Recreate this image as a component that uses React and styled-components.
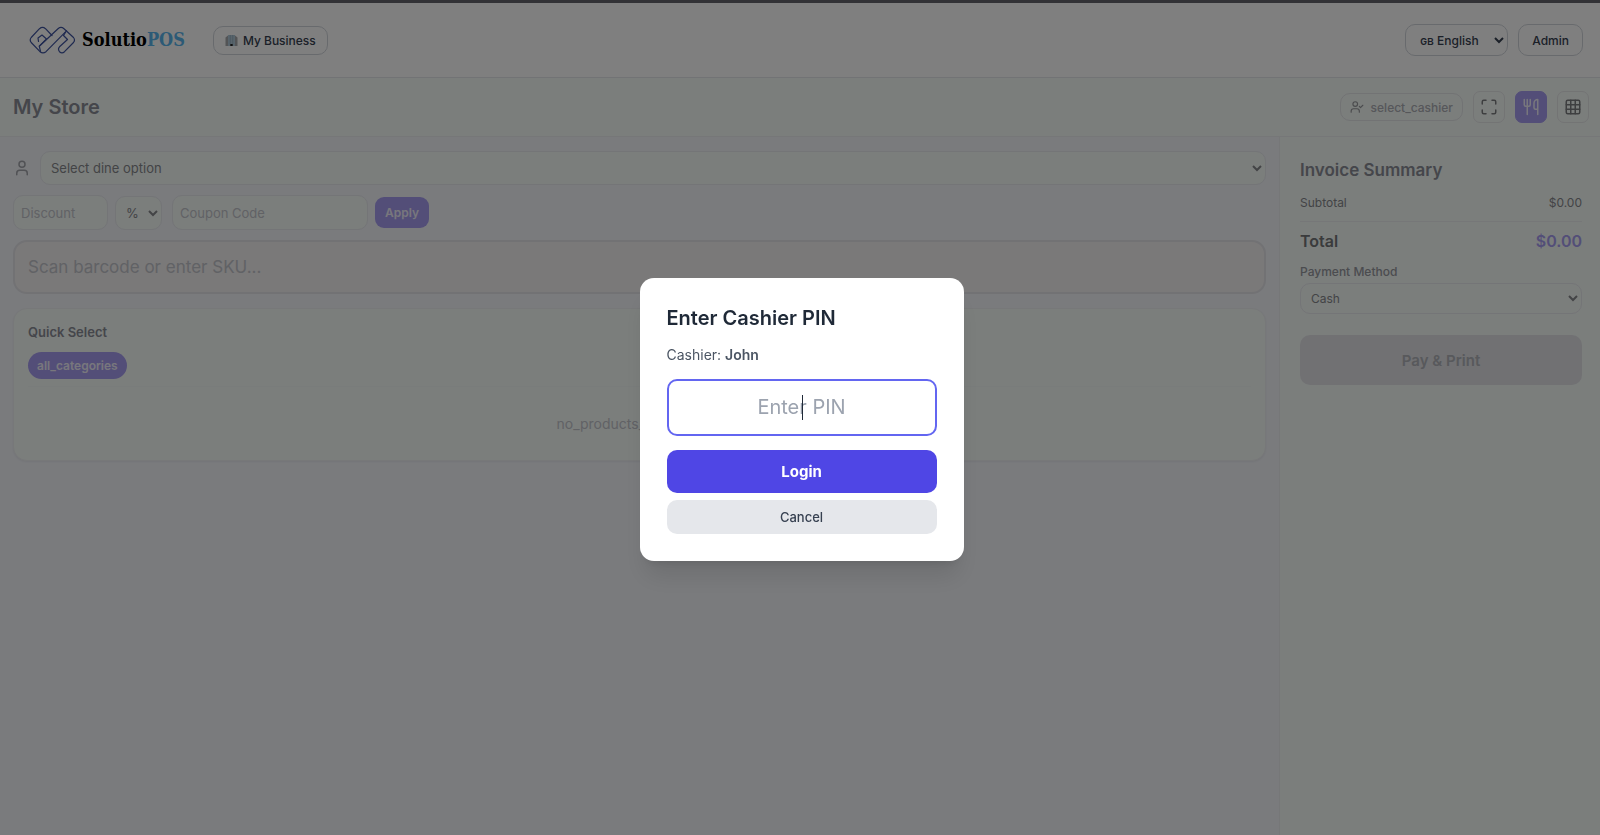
import React, { useState } from 'react';
import styled, { createGlobalStyle, css } from 'styled-components';
import { User, UserCheck, Maximize, Utensils, Grid3x3 } from 'lucide-react';

const GlobalStyle = createGlobalStyle`
  * {
    box-sizing: border-box;
  }

  body {
    margin: 0;
    font-family: Inter, sans-serif;
    font-size: 14px;
    color: #6a6b70;
    background: #f4f6fb;
  }

  button, input, select {
    font-family: inherit;
    margin: 0;
  }

  h1, h2, h3, p {
    margin: 0;
  }
`;

const Page = styled.div`
  min-height: 100vh;
  display: flex;
  flex-direction: column;
  border-top: 3px solid #64646c;
`;

const Header = styled.header`
  display: flex;
  align-items: center;
  justify-content: space-between;
  height: 75px;
  padding: 0 17px 0 29px;
  background: #ffffff;
  border-bottom: 1px solid #e5e7eb;
`;

const Group = styled.div`
  display: flex;
  align-items: center;
  gap: ${(p) => p.$gap || 10}px;
`;

const Brand = styled.a`
  display: flex;
  align-items: center;
  gap: 6px;
  font-family: "DejaVu Serif Condensed", "Liberation Serif", serif;
  font-size: 18px;
  line-height: 28px;
  font-weight: 700;
  color: #000000;
  text-decoration: none;

  span span {
    color: #59b4ec;
  }
`;

const pill = css`
  height: ${(p) => p.$height || 32}px;
  border: 1px solid #d1d5db;
  border-radius: 10px;
  background: #ffffff;
  color: #374151;
  font-size: 12px;
  font-weight: 500;
`;

const HeaderButton = styled.button`
  ${pill}
  display: flex;
  align-items: center;
  gap: 5px;
  padding: 0 ${(p) => p.$pad || 13}px;
`;

const LanguageSelect = styled.select`
  ${pill}
  width: 103px;
  padding: 0 0 0 10px;
`;

const Toolbar = styled.div`
  display: flex;
  align-items: center;
  justify-content: space-between;
  height: 59px;
  padding: 0 11px 0 13px;
  background: #f7fcf9;
  border-bottom: 1px solid #eceef0;
`;

const StoreName = styled.h1`
  font-size: 20px;
  line-height: 28px;
  font-weight: 600;
  color: #8a8d96;
`;

const CashierButton = styled.button`
  display: flex;
  align-items: center;
  gap: 7px;
  height: 28px;
  padding: 0 9px;
  border: 1px solid #e4e6e8;
  border-radius: 10px;
  background: transparent;
  color: #acaeb4;
  font-size: 12px;
  font-weight: 500;

  svg {
    color: #96989c;
  }
`;

const IconButton = styled.button`
  display: flex;
  align-items: center;
  justify-content: center;
  width: 32px;
  height: 32px;
  padding: 0;
  border: 1px solid ${(p) => (p.$active ? '#a69cf0' : '#e6e8e9')};
  border-radius: 7px;
  background: ${(p) => (p.$active ? '#a69cf0' : '#f7fcf9')};
  color: ${(p) => (p.$active ? '#f0eefa' : '#7c7e80')};
`;

const Body = styled.div`
  flex: 1;
  display: flex;
`;

const Main = styled.main`
  flex: 1;
  min-width: 0;
  display: flex;
  flex-direction: column;
  padding: 14px 13px;
`;

const DineRow = styled.label`
  display: flex;
  align-items: center;
  gap: 9px;
  color: #a2a4aa;
`;

const field = css`
  border: 1px solid #e8eaee;
  border-radius: 10px;
  background: #f7fcf9;
  color: #86888c;
  font-size: 13px;

  &::placeholder {
    color: #c2c4cb;
  }
`;

const DineSelect = styled.select`
  ${field}
  flex: 1;
  min-width: 0;
  height: 34px;
  padding: 0 0 0 6px;
`;

const DiscountRow = styled.div`
  display: flex;
  align-items: center;
  gap: 7px;
  margin-top: 10px;
`;

const TextField = styled.input`
  ${field}
  width: ${(p) => p.$width}px;
  height: 35px;
  padding: 0 7px;
`;

const UnitSelect = styled.select`
  ${field}
  width: 47px;
  height: 34px;
  margin-right: 3px;
  padding: 0 0 0 6px;
`;

const ApplyButton = styled.button`
  height: 31px;
  padding: 0 10px;
  border: 0;
  border-radius: 9px;
  background: #a69cf0;
  color: #f0eefa;
  font-size: 12px;
  font-weight: 600;
`;

const ScanInput = styled.input`
  width: 100%;
  height: 54px;
  margin-top: 10px;
  padding: 0 13px;
  border: 2px solid #e4e4e9;
  border-radius: 14px;
  background: #f5f2f2;
  font-size: 17px;

  &::placeholder {
    color: #c2c4cb;
  }
`;

const Card = styled.section`
  margin-top: 14px;
  padding: 14px 14px 27px;
  border: 1px solid #eff1f3;
  border-radius: 14px;
  background: #f7fcf9;
  box-shadow: 0 1px 2px rgba(0, 0, 0, 0.05);
`;

const CardTitle = styled.h2`
  font-size: 13px;
  line-height: 18px;
  font-weight: 600;
  color: #8a8d96;
`;

const Categories = styled.div`
  display: flex;
  gap: 7px;
  padding: 11px 0 7px;
  border-bottom: 1px solid #f3f8f6;
`;

const Category = styled.button`
  height: 27px;
  padding: 0 9px;
  border: 0;
  border-radius: 14px;
  background: #a69cf0;
  color: #f0eefa;
  font-size: 12px;
  font-weight: 600;
`;

const Empty = styled.p`
  padding-top: 28px;
  font-size: 14px;
  line-height: 18px;
  text-align: center;
  color: #c2c4cb;
`;

const Summary = styled.aside`
  width: 321px;
  padding: 21px 18px 20px 20px;
  border-left: 1px solid #eceef0;
  background: #f7fcf9;
`;

const SummaryTitle = styled.h2`
  font-size: 17px;
  line-height: 24px;
  font-weight: 600;
  color: #8a8d96;
`;

const SummaryRow = styled.div`
  display: flex;
  justify-content: space-between;
  padding: 12px 0 9px;
  border-bottom: 1px solid #eceef0;
  font-size: 12px;
  line-height: 18px;
  color: #86888c;
`;

const TotalRow = styled.div`
  display: flex;
  justify-content: space-between;
  padding-top: 8px;
  font-size: 16px;
  line-height: 22px;
  font-weight: 600;
  color: #747678;

  strong {
    font-weight: 600;
    color: #a69cf0;
  }
`;

const PaymentLabel = styled.label`
  display: block;
  margin-top: 11px;
  font-size: 12px;
  line-height: 18px;
  font-weight: 500;
  color: #96989f;
`;

const PaymentSelect = styled.select`
  ${field}
  width: 100%;
  height: 31px;
  margin-top: 2px;
  padding: 0 0 0 6px;
  font-size: 12px;
`;

const PayButton = styled.button`
  width: 100%;
  height: 50px;
  margin-top: 21px;
  border: 0;
  border-radius: 10px;
  background: #e2e3e7;
  color: #b0b2b8;
  font-size: 15px;
  font-weight: 600;
`;

const Backdrop = styled.div`
  position: fixed;
  inset: 0;
  display: flex;
  align-items: center;
  justify-content: center;
  padding: 3px 0 0 3px;
  background: rgba(0, 0, 0, 0.5);
`;

const Modal = styled.form`
  display: flex;
  flex-direction: column;
  width: 324px;
  padding: 27px;
  border-radius: 14px;
  background: #ffffff;
  box-shadow: 0 20px 25px -5px rgba(0, 0, 0, 0.1), 0 8px 10px -6px rgba(0, 0, 0, 0.1);
`;

const ModalTitle = styled.h2`
  font-size: 20px;
  line-height: 26px;
  font-weight: 600;
  color: #1f2937;
`;

const ModalText = styled.p`
  margin-top: 14px;
  font-size: 14px;
  line-height: 20px;
  color: #4b5563;

  strong {
    font-weight: 600;
  }
`;

const PinField = styled.label`
  position: relative;
  display: block;
  margin-top: 14px;
`;

const PinInput = styled.input`
  display: block;
  width: 100%;
  height: 57px;
  padding: 0 14px;
  border: 2px solid #6366f1;
  border-radius: 10px;
  outline: 0;
  background: #ffffff;
  font-size: 20px;
  text-align: center;
  color: #1f2937;
  caret-color: transparent;

  &::placeholder {
    color: #9ca3af;
  }
`;

const Caret = styled.span`
  position: absolute;
  top: 16px;
  left: 50%;
  width: 1px;
  height: 25px;
  background: #1f2937;
`;

const LoginButton = styled.button`
  height: 43px;
  margin-top: 14px;
  border: 0;
  border-radius: 10px;
  background: #4f46e5;
  color: #ffffff;
  font-size: 15px;
  font-weight: 700;
`;

const CancelButton = styled.button`
  height: 34px;
  margin-top: 7px;
  border: 0;
  border-radius: 10px;
  background: #e5e7eb;
  color: #374151;
  font-size: 13px;
  font-weight: 500;
`;

function Logo() {
  return (
    <svg width="47" height="29" viewBox="0 0 47 29" fill="none" stroke="#3f54a0" strokeWidth="1.2" strokeLinejoin="round" strokeLinecap="round">
      <path d="M23 9.500 16.500 2.700Q13.500 .2 10.500 2.700L2.200 11.500Q.2 14 2.200 16.500L11 25.700Q14 28 17 25.700L37.500 4.800" />
      <path d="M9.500 15.500 9 12 13 9 17.500 13 10.300 20.200 11.500 25.500" />
      <path d="M10.300 20.200 29 2.700Q32 .2 35 2.700L44.500 11.500Q46.500 14 44.500 16.500L35.500 25.700Q33 28 30.500 25.700 28.500 23 30.500 20.800L38.500 13.500 34.500 9.500 37.500 4.800" />
    </svg>
  );
}

function BuildingIcon() {
  return (
    <svg width="13" height="13" viewBox="0 0 13 13">
      <path d="M.5 3.500 3 1.500V12H.5zM12.500 3.500 10 1.500V12h2.500z" fill="#a7a9ac" />
      <path d="M3 1h7v11H3z" fill="#b0c9d8" />
      <path d="M5.300 1v9M7.700 1v9" stroke="#90a8b8" strokeWidth=".7" />
      <path d="M5.300 10h2.400v2H5.300z" fill="#222222" />
    </svg>
  );
}

export default function App() {
  const [pin, setPin] = useState('');

  return (
    <>
      <GlobalStyle />
      <Page>
        <Header>
          <Group $gap={28}>
            <Brand href="#">
              <Logo />
              <span>Solutio<span>POS</span></span>
            </Brand>
            <HeaderButton $height={29} $pad={11}>
              <BuildingIcon />
              My Business
            </HeaderButton>
          </Group>
          <Group>
            <LanguageSelect aria-label="Language">
              <option>ɢʙ English</option>
            </LanguageSelect>
            <HeaderButton>Admin</HeaderButton>
          </Group>
        </Header>

        <Toolbar>
          <StoreName>My Store</StoreName>
          <Group>
            <CashierButton>
              <UserCheck size={14} />
              select_cashier
            </CashierButton>
            <IconButton aria-label="Full screen"><Maximize size={18} /></IconButton>
            <IconButton aria-label="Dining" $active><Utensils size={18} /></IconButton>
            <IconButton aria-label="Tables"><Grid3x3 size={18} /></IconButton>
          </Group>
        </Toolbar>

        <Body>
          <Main>
            <DineRow>
              <User size={18} />
              <DineSelect aria-label="Dine option">
                <option>Select dine option</option>
              </DineSelect>
            </DineRow>
            <DiscountRow>
              <TextField $width={95} placeholder="Discount" aria-label="Discount" />
              <UnitSelect aria-label="Discount unit">
                <option>%</option>
                <option>$</option>
              </UnitSelect>
              <TextField $width={196} placeholder="Coupon Code" aria-label="Coupon code" />
              <ApplyButton>Apply</ApplyButton>
            </DiscountRow>
            <ScanInput placeholder="Scan barcode or enter SKU..." aria-label="Barcode" />
            <Card>
              <CardTitle>Quick Select</CardTitle>
              <Categories>
                <Category>all_categories</Category>
              </Categories>
              <Empty>no_products_in_category</Empty>
            </Card>
          </Main>

          <Summary>
            <SummaryTitle>Invoice Summary</SummaryTitle>
            <SummaryRow>
              <span>Subtotal</span>
              <span>$0.00</span>
            </SummaryRow>
            <TotalRow>
              <span>Total</span>
              <strong>$0.00</strong>
            </TotalRow>
            <PaymentLabel htmlFor="payment">Payment Method</PaymentLabel>
            <PaymentSelect id="payment">
              <option>Cash</option>
              <option>Card</option>
            </PaymentSelect>
            <PayButton disabled>Pay &amp; Print</PayButton>
          </Summary>
        </Body>
      </Page>

      <Backdrop>
        <Modal onSubmit={(e) => e.preventDefault()}>
          <ModalTitle>Enter Cashier PIN</ModalTitle>
          <ModalText>Cashier: <strong>John</strong></ModalText>
          <PinField>
            <PinInput
              type="password"
              placeholder="Enter PIN"
              aria-label="PIN"
              value={pin}
              onChange={(e) => setPin(e.target.value)}
              autoFocus
            />
            {!pin && <Caret />}
          </PinField>
          <LoginButton type="submit">Login</LoginButton>
          <CancelButton type="button">Cancel</CancelButton>
        </Modal>
      </Backdrop>
    </>
  );
}
